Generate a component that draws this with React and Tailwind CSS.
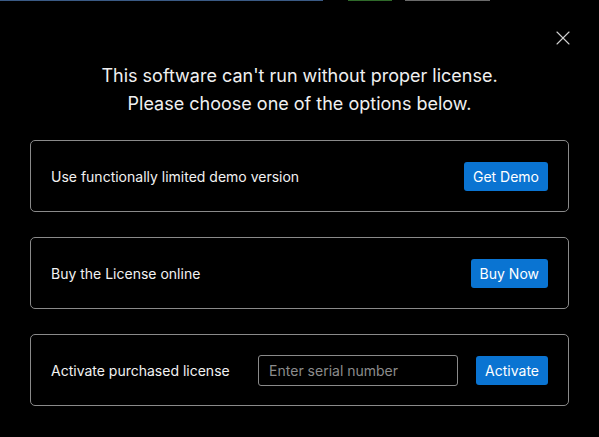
import { X } from "lucide-react";

function Card({ label, children }) {
  return (
    <div className="flex h-[72px] items-center justify-between rounded-[5px] border border-[#8a8a8a] pl-[20px] pr-[20px]">
      <span className="text-[14px] text-[#f2f2f2]">{label}</span>
      {children}
    </div>
  );
}

function BlueButton({ children, className = "" }) {
  return (
    <button className={"h-[29px] rounded-[3px] bg-[#0a74d2] px-[9px] text-[14px] text-white " + className}>
      {children}
    </button>
  );
}

export default function App() {
  return (
    <div className="h-[437px] w-[599px] overflow-hidden bg-black" style={{ fontFamily: "Inter, 'Noto Sans', sans-serif" }}>
      <div className="flex h-[2px] items-start">
        <div className="h-[1px] w-[323px] bg-[#3a5a85]" />
        <div className="ml-[25px] h-[1px] w-[44px] bg-[#2f6a2a]" />
        <div className="ml-[13px] h-[1px] w-[85px] bg-[#6a6a6a]" />
      </div>
      <div className="flex justify-end pr-[24px] pt-[24px]">
        <X className="h-[24px] w-[24px] text-[#d0d0d0]" strokeWidth={1.1} />
      </div>
      <div className="mt-[12px] text-center text-[18px] leading-[28px] text-[#f0f0f0]">
        <p>This software can't run without proper license.</p>
        <p>Please choose one of the options below.</p>
      </div>
      <div className="mt-[22px] flex flex-col gap-[25px] px-[30px]">
        <Card label="Use functionally limited demo version">
          <BlueButton>Get Demo</BlueButton>
        </Card>
        <Card label="Buy the License online">
          <BlueButton>Buy Now</BlueButton>
        </Card>
        <Card label="Activate purchased license">
          <div className="flex items-center">
            <input
              placeholder="Enter serial number"
              className="h-[31px] w-[200px] rounded-[3px] border border-[#8a8a8a] bg-black px-[10px] text-[14px] text-white outline-none placeholder:text-[#8c8c8c]"
            />
            <BlueButton className="ml-[18px]">Activate</BlueButton>
          </div>
        </Card>
      </div>
    </div>
  );
}
